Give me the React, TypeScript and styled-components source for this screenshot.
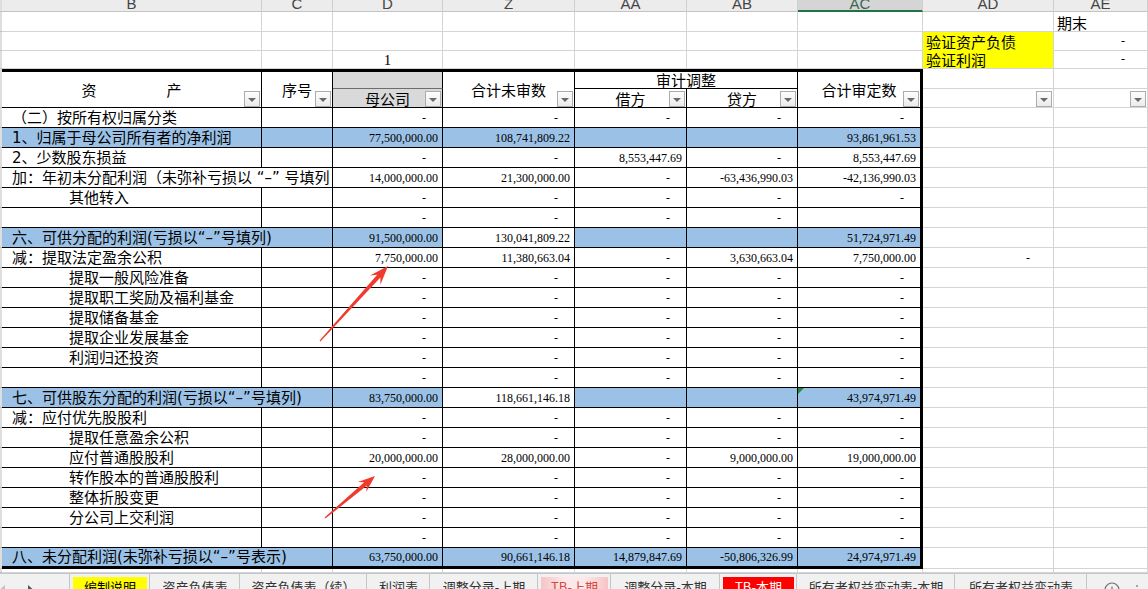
import React from "react";
import styled, { createGlobalStyle, css } from "styled-components";

const GlobalStyle = createGlobalStyle`
  html, body { margin: 0; padding: 0; background: #fff; overflow: hidden; }
  body { font-family: "Noto Sans CJK SC", "Noto Sans", sans-serif; }
`;

const COLS = "2px 260px 71px 110px 132px 112px 111px 125px 131px 94px";
const BLUE = "#9bc2e6";
const GRID = "#d4d4d4";
const CJK = `"Noto Sans CJK SC", "Noto Sans", sans-serif`;
const MIXED = `"DejaVu Sans", "Noto Sans CJK SC", sans-serif`;
const NUM = `"Liberation Serif", serif`;

const Page = styled.div`
  position: relative;
  width: 1148px;
  height: 589px;
  overflow: hidden;
  background: #fff;
  font-family: ${CJK};
`;

const Row = styled.div<{ $h: number }>`
  display: grid;
  grid-template-columns: ${COLS};
  height: ${(p) => p.$h}px;
`;

const cellBase = css`
  box-sizing: border-box;
  min-width: 0;
  overflow: hidden;
  white-space: nowrap;
  display: flex;
  align-items: flex-end;
  position: relative;
`;

/* ---------- column letters ---------- */
const ColLetter = styled.div<{ $active?: boolean }>`
  box-sizing: border-box;
  overflow: hidden;
  text-align: center;
  border-right: 1px solid #cfcfcf;
  border-bottom: ${(p) => (p.$active ? "2px solid #217346" : "1px solid #c4c4c4")};
  background: ${(p) => (p.$active ? "#d5d5d5" : "#ececec")};
  color: ${(p) => (p.$active ? "#3b6650" : "#444")};
  font: 15px/8px "Liberation Sans", sans-serif;
`;

const Strip = styled.div<{ $rows?: number }>`
  box-sizing: border-box;
  grid-row: span ${(p) => p.$rows ?? 1};
  background: #dedede;
  border-bottom: 1px solid #c2c2c2;
`;

/* ---------- plain sheet cells (outside the table) ---------- */
const GridCell = styled.div<{ $align?: "flex-start" | "center" | "flex-end"; $fill?: string; $noBottom?: boolean }>`
  ${cellBase};
  justify-content: ${(p) => p.$align ?? "flex-start"};
  background: ${(p) => p.$fill ?? "#fff"};
  border-right: 1px solid ${GRID};
  border-bottom: 1px solid ${(p) => (p.$noBottom ? p.$fill ?? "#fff" : GRID)};
  padding: 0 3px;
  font: 15px/16px ${CJK};
  color: #000;
`;

const SerifText = styled.span`
  font: 15px/16px ${NUM};
`;

const Dash = styled.span<{ $gap?: number }>`
  font: 12px/18px ${NUM};
  margin-right: ${(p) => p.$gap ?? 12}px;
`;

/* ---------- header of the table ---------- */
const HeaderGrid = styled.div`
  display: grid;
  grid-template-columns: ${COLS};
  grid-template-rows: 20px 19px;
`;

const HeadCell = styled.div<{
  $rows?: number;
  $cols?: number;
  $top?: boolean;
  $thick?: boolean;
  $bg?: string;
  $bb?: string;
  $pt?: number;
}>`
  box-sizing: border-box;
  position: relative;
  grid-row: span ${(p) => p.$rows ?? 1};
  grid-column: span ${(p) => p.$cols ?? 1};
  display: flex;
  align-items: center;
  justify-content: center;
  padding-top: ${(p) => p.$pt ?? 0}px;
  border-top: ${(p) => (p.$top ? "3px solid #000" : "0")};
  border-right: ${(p) => (p.$thick ? 3 : 1)}px solid #000;
  border-bottom: 1px solid ${(p) => p.$bb ?? "#000"};
  background: ${(p) => p.$bg ?? "#fff"};
  font: 15px/18px ${CJK};
  color: #000;
  white-space: nowrap;
`;

const HeadOuter = styled.div`
  box-sizing: border-box;
  position: relative;
  border-right: 1px solid ${GRID};
  border-bottom: 1px solid ${GRID};
`;

const SpacedTitle = styled.span`
  display: flex;
  gap: 70px;
`;

const FilterButton = styled.span`
  position: absolute;
  right: 1px;
  bottom: 0;
  width: 16px;
  height: 16px;
  box-sizing: border-box;
  border: 1px solid #acacac;
  background: linear-gradient(#fdfdfd, #ebebeb);
  display: flex;
  align-items: center;
  justify-content: center;
  &::after {
    content: "";
    margin-top: 1px;
    border-left: 4px solid transparent;
    border-right: 4px solid transparent;
    border-top: 4px solid #6a6a6a;
  }
`;

/* ---------- table body ---------- */
const LabelCell = styled.div<{ $span?: boolean; $indent?: boolean; $blue?: boolean; $last?: boolean }>`
  ${cellBase};
  grid-column: span ${(p) => (p.$span ? 2 : 1)};
  padding-left: ${(p) => (p.$indent ? 67 : 10)}px;
  background: ${(p) => (p.$blue ? BLUE : "#fff")};
  border-right: 1px solid #000;
  border-bottom: ${(p) => (p.$last ? 3 : 1)}px solid #000;
  font: 15px/18px ${MIXED};
  color: #000;
`;

const SeqCell = styled.div<{ $blue?: boolean }>`
  box-sizing: border-box;
  background: ${(p) => (p.$blue ? BLUE : "#fff")};
  border-right: 1px solid #000;
  border-bottom: 1px solid #000;
`;

const NumCell = styled.div<{ $blue?: boolean; $thick?: boolean; $last?: boolean }>`
  ${cellBase};
  justify-content: flex-end;
  padding-right: 4px;
  background: ${(p) => (p.$blue ? BLUE : "#fff")};
  border-right: ${(p) => (p.$thick ? 3 : 1)}px solid #000;
  border-bottom: ${(p) => (p.$last ? 3 : 1)}px solid #000;
  font: 12px/18px ${NUM};
  color: #000;
`;

const ErrorFlag = styled.span`
  position: absolute;
  left: 0;
  top: 0;
  width: 0;
  height: 0;
  border-top: 6px solid #1f8a3b;
  border-right: 6px solid transparent;
`;

/* ---------- sheet tabs ---------- */
const TabBar = styled.div`
  display: flex;
  align-items: stretch;
  height: 30px;
  box-sizing: border-box;
  border-top: 1px solid #c6c6c6;
  background: #f1f1f1;
  font: 13px/18px ${CJK};
  color: #333;
`;

const NavArea = styled.div`
  width: 70px;
  box-sizing: border-box;
  border-right: 1px solid #c6c6c6;
  display: flex;
  align-items: flex-start;
  padding-top: 11px;
  gap: 21px;
`;

const TabSlot = styled.div<{ $w: number }>`
  width: ${(p) => p.$w}px;
  flex: none;
  box-sizing: border-box;
  border-right: 1px solid #c6c6c6;
  padding: 3px 2px 0 3px;
  display: flex;
`;

const TabLabel = styled.div<{ $bg?: string; $color?: string }>`
  flex: 1;
  text-align: center;
  background: ${(p) => p.$bg ?? "transparent"};
  color: ${(p) => p.$color ?? "#333"};
  padding-top: 1px;
`;

const TabTools = styled.div`
  display: flex;
  align-items: flex-start;
  padding: 8px 0 0 17px;
  gap: 15px;
`;

const Overlay = styled.svg`
  position: absolute;
  left: 0;
  top: 0;
  pointer-events: none;
`;

/* ---------- data ---------- */
type RowData = {
  label: string;
  indent?: boolean;
  span?: boolean;
  blue?: boolean;
  zBlue?: boolean;
  last?: boolean;
  flag?: boolean;
  ad?: boolean;
  vals: string[];
};

const D5 = ["-", "-", "-", "-", "-"];

const rows: RowData[] = [
  { label: "（二）按所有权归属分类", vals: D5 },
  { label: "1、归属于母公司所有者的净利润", blue: true, zBlue: true, vals: ["77,500,000.00", "108,741,809.22", "", "", "93,861,961.53"] },
  { label: "2、少数股东损益", vals: ["-", "-", "8,553,447.69", "-", "8,553,447.69"] },
  { label: "加：年初未分配利润（未弥补亏损以 “–” 号填列", span: true, vals: ["14,000,000.00", "21,300,000.00", "-", "-63,436,990.03", "-42,136,990.03"] },
  { label: "其他转入", indent: true, vals: D5 },
  { label: "", vals: ["-", "-", "-", "-", ""] },
  { label: "六、可供分配的利润(亏损以“–”号填列)", span: true, blue: true, vals: ["91,500,000.00", "130,041,809.22", "", "", "51,724,971.49"] },
  { label: "减：提取法定盈余公积", ad: true, vals: ["7,750,000.00", "11,380,663.04", "-", "3,630,663.04", "7,750,000.00"] },
  { label: "提取一般风险准备", indent: true, vals: D5 },
  { label: "提取职工奖励及福利基金", indent: true, vals: D5 },
  { label: "提取储备基金", indent: true, vals: D5 },
  { label: "提取企业发展基金", indent: true, vals: D5 },
  { label: "利润归还投资", indent: true, vals: D5 },
  { label: "", vals: D5 },
  { label: "七、可供股东分配的利润(亏损以“–”号填列)", span: true, blue: true, flag: true, vals: ["83,750,000.00", "118,661,146.18", "", "", "43,974,971.49"] },
  { label: "减：应付优先股股利", vals: D5 },
  { label: "提取任意盈余公积", indent: true, vals: D5 },
  { label: "应付普通股股利", indent: true, vals: ["20,000,000.00", "28,000,000.00", "-", "9,000,000.00", "19,000,000.00"] },
  { label: "转作股本的普通股股利", indent: true, vals: D5 },
  { label: "整体折股变更", indent: true, vals: D5 },
  { label: "分公司上交利润", indent: true, vals: D5 },
  { label: "", vals: D5 },
  { label: "八、未分配利润(未弥补亏损以“–”号表示)", span: true, blue: true, zBlue: true, last: true, vals: ["63,750,000.00", "90,661,146.18", "14,879,847.69", "-50,806,326.99", "24,974,971.49"] },
];

const letters = ["B", "C", "D", "Z", "AA", "AB", "AC", "AD", "AE"];

const tabs: { name: string; w: number; bg?: string; color?: string }[] = [
  { name: "编制说明", w: 80, bg: "#ffff00", color: "#000" },
  { name: "资产负债表", w: 90 },
  { name: "资产负债表（续）", w: 127 },
  { name: "利润表", w: 63 },
  { name: "调整分录-上期", w: 108 },
  { name: "TB-上期", w: 73, bg: "linear-gradient(90deg,#f6c4c4,#fde9e9 35%,#fde9e9 65%,#f6c4c4)", color: "#d9443f" },
  { name: "调整分录-本期", w: 109 },
  { name: "TB-本期", w: 77, bg: "#ff0000", color: "#fff" },
  { name: "所有者权益变动表-本期", w: 158 },
  { name: "所有者权益变动表", w: 132 },
];

function arrowPoints(tx: number, ty: number, px: number, py: number, head: number, half: number) {
  const dx = px - tx;
  const dy = py - ty;
  const L = Math.hypot(dx, dy);
  const ux = dx / L;
  const uy = dy / L;
  const nx = -uy;
  const ny = ux;
  const bx = px - ux * head;
  const by = py - uy * head;
  const kx = px - ux * head * 0.72;
  const ky = py - uy * head * 0.72;
  const neck = 2.2;
  const tail = 0.6;
  const pts = [
    [tx + nx * tail, ty + ny * tail],
    [kx + nx * neck, ky + ny * neck],
    [bx + nx * half, by + ny * half],
    [px, py],
    [bx - nx * half, by - ny * half],
    [kx - nx * neck, ky - ny * neck],
    [tx - nx * tail, ty - ny * tail],
  ];
  return pts.map((p) => `${p[0].toFixed(1)},${p[1].toFixed(1)}`).join(" ");
}

export default function App() {
  return (
    <Page lang="zh-CN">
      <GlobalStyle />

      {/* column letters */}
      <Row $h={12}>
        <Strip />
        {letters.map((l) => (
          <ColLetter key={l} $active={l === "AC"}>
            {l}
          </ColLetter>
        ))}
      </Row>

      {/* rows above the table */}
      <Row $h={20}>
        <Strip />
        <GridCell />
        <GridCell />
        <GridCell />
        <GridCell />
        <GridCell />
        <GridCell />
        <GridCell />
        <GridCell />
        <GridCell>期末</GridCell>
      </Row>
      <Row $h={19}>
        <Strip />
        <GridCell />
        <GridCell />
        <GridCell />
        <GridCell />
        <GridCell />
        <GridCell />
        <GridCell />
        <GridCell $fill="#ffff00" $noBottom>
          验证资产负债
        </GridCell>
        <GridCell $align="flex-end">
          <Dash $gap={19}>-</Dash>
        </GridCell>
      </Row>
      <Row $h={18}>
        <Strip />
        <GridCell />
        <GridCell />
        <GridCell $align="center">
          <SerifText>1</SerifText>
        </GridCell>
        <GridCell />
        <GridCell />
        <GridCell />
        <GridCell />
        <GridCell $fill="#ffff00">验证利润</GridCell>
        <GridCell $align="flex-end">
          <Dash $gap={19}>-</Dash>
        </GridCell>
      </Row>

      {/* table header */}
      <HeaderGrid>
        <Strip $rows={2} />
        <HeadCell $rows={2} $top>
          <SpacedTitle>
            <span>资</span>
            <span>产</span>
          </SpacedTitle>
          <FilterButton />
        </HeadCell>
        <HeadCell $rows={2} $top>
          序号
          <FilterButton />
        </HeadCell>
        <HeadCell $top $bg="#d9d9d9" $bb="#6d6d6d" />
        <HeadCell $rows={2} $top>
          合计未审数
          <FilterButton />
        </HeadCell>
        <HeadCell $cols={2} $top>
          审计调整
        </HeadCell>
        <HeadCell $rows={2} $top $thick>
          合计审定数
          <FilterButton />
        </HeadCell>
        <HeadOuter />
        <HeadOuter />
        <HeadCell $bg="#d9d9d9" $pt={2}>
          母公司
          <FilterButton />
        </HeadCell>
        <HeadCell $pt={2}>
          借方
          <FilterButton />
        </HeadCell>
        <HeadCell $pt={2}>
          贷方
          <FilterButton />
        </HeadCell>
        <HeadOuter>
          <FilterButton />
        </HeadOuter>
        <HeadOuter>
          <FilterButton />
        </HeadOuter>
      </HeaderGrid>

      {/* table body */}
      {rows.map((r, i) => (
        <Row key={i} $h={r.last ? 21 : 20}>
          <Strip />
          <LabelCell $span={r.span} $indent={r.indent} $blue={r.blue} $last={r.last}>
            {r.label}
          </LabelCell>
          {!r.span && <SeqCell $blue={r.blue} />}
          {r.vals.map((v, j) => (
            <NumCell key={j} $blue={!!r.blue && (j !== 1 || !!r.zBlue)} $thick={j === 4} $last={r.last}>
              {j === 4 && r.flag && <ErrorFlag />}
              {v === "-" ? <Dash>-</Dash> : v}
            </NumCell>
          ))}
          <GridCell $align="flex-end">{r.ad && <Dash $gap={20}>-</Dash>}</GridCell>
          <GridCell />
        </Row>
      ))}

      {/* sliver of the next row */}
      <Row $h={4}>
        <Strip />
        <GridCell />
        <GridCell />
        <GridCell />
        <GridCell />
        <GridCell />
        <GridCell />
        <GridCell />
        <GridCell />
        <GridCell />
      </Row>

      {/* sheet tabs */}
      <TabBar>
        <NavArea>
          <svg width="6" height="9" viewBox="0 0 6 9">
            <path d="M5 0 L0 4.5 L5 9 Z" fill="#c2c2c2" />
          </svg>
          <svg width="6" height="9" viewBox="0 0 6 9">
            <path d="M1 0 L6 4.5 L1 9 Z" fill="#4d5a52" />
          </svg>
        </NavArea>
        {tabs.map((t) => (
          <TabSlot key={t.name} $w={t.w}>
            <TabLabel $bg={t.bg} $color={t.color}>
              {t.name}
            </TabLabel>
          </TabSlot>
        ))}
        <TabTools>
          <svg width="16" height="16" viewBox="0 0 16 16">
            <circle cx="8" cy="8" r="7" fill="none" stroke="#707070" strokeWidth="1.2" />
            <path d="M8 4.5 V11.5 M4.5 8 H11.5" stroke="#707070" strokeWidth="1.2" />
          </svg>
          <svg width="4" height="16" viewBox="0 0 4 16">
            <circle cx="2" cy="4" r="1" fill="#8a8a8a" />
            <circle cx="2" cy="8" r="1" fill="#8a8a8a" />
            <circle cx="2" cy="12" r="1" fill="#8a8a8a" />
          </svg>
        </TabTools>
      </TabBar>

      {/* red annotation arrows */}
      <Overlay width={1148} height={589} viewBox="0 0 1148 589">
        <polygon points={arrowPoints(320, 341, 388, 266, 19, 7)} fill="#ef3a2d" />
        <polygon points={arrowPoints(325, 518, 375, 476, 17, 6.5)} fill="#ef3a2d" />
      </Overlay>
    </Page>
  );
}
